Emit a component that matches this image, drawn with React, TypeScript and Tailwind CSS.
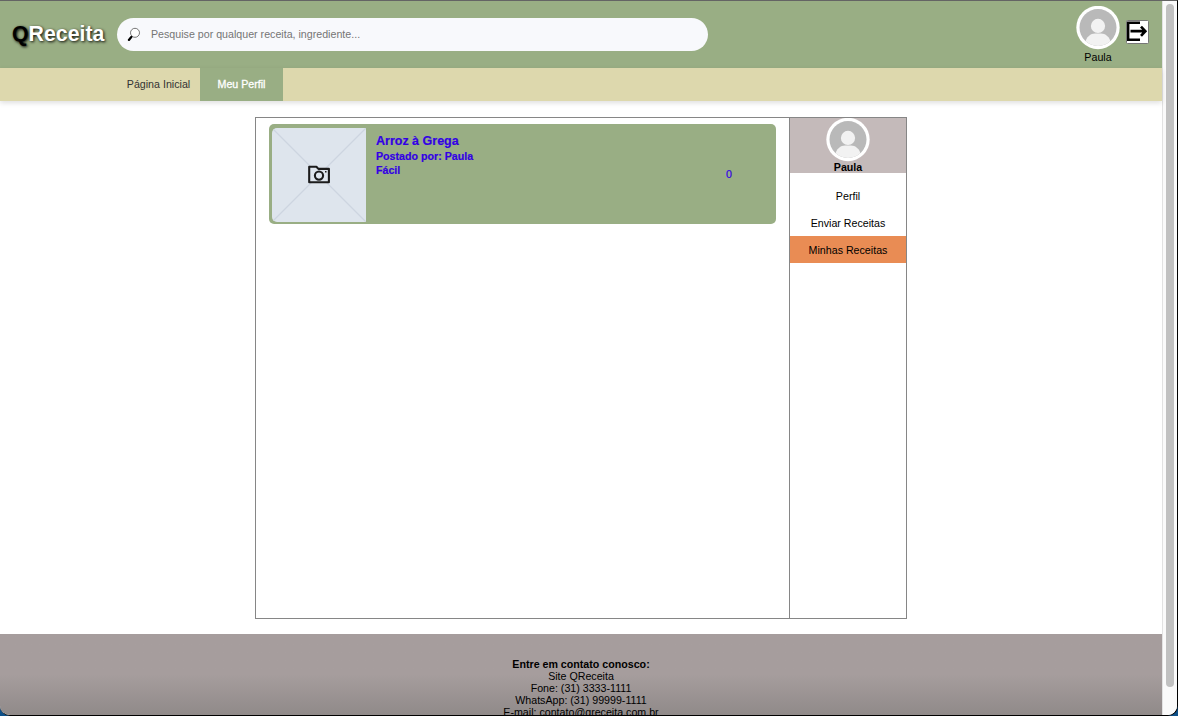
import React from "react";

function Avatar() {
  return (
    <svg viewBox="0 0 44 44" className="block h-11 w-11 shrink-0">
      <defs>
        <clipPath id="avatar-clip">
          <circle cx="22" cy="21.5" r="18.5" />
        </clipPath>
      </defs>
      <circle cx="22" cy="21.5" r="21.7" fill="#fff" />
      <circle cx="22" cy="21.5" r="18.5" fill="#b9b9b9" />
      <g clipPath="url(#avatar-clip)" fill="#f2f2f2">
        <circle cx="22" cy="19.9" r="7.1" />
        <path d="M9 42V38C10 30.5 15 27.6 19 27.6H25C29 27.6 34 30.5 35 38V42Z" />
      </g>
    </svg>
  );
}

function SearchIcon() {
  return (
    <svg viewBox="0 0 14 15" className="h-[15px] w-[14px] shrink-0">
      <circle cx="8" cy="5.8" r="4.5" fill="#fff" stroke="#555" strokeWidth="0.8" />
      <path d="M5 9.2L4.2 10.2" stroke="#555" strokeWidth="1" />
      <path d="M4.3 10.1L1.9 12.9" stroke="#000" strokeWidth="2.3" strokeLinecap="round" />
    </svg>
  );
}

function ExitIcon() {
  return (
    <svg viewBox="0 0 23 24" className="h-6 w-[23px] shrink-0">
      <rect x="0.5" y="0.5" width="22" height="23" rx="1" fill="#fff" stroke="#777" />
      <path d="M14 2.8H2.2V19.7H14" fill="none" stroke="#000" strokeWidth="2.4" />
      <path d="M4.5 11.2H19M15 6.6L19.3 11.2L15 15.8" fill="none" stroke="#000" strokeWidth="2.7" />
    </svg>
  );
}

function Placeholder() {
  return (
    <svg viewBox="0 0 94 94" className="h-[94px] w-[94px] shrink-0 rounded-l-[5px]">
      <rect width="94" height="94" fill="#dee5ed" />
      <path d="M0 0L94 94M94 0L0 94" stroke="#cdd5e0" strokeWidth="1.3" />
      <path
        d="M37.2 38.8H44.4L46.4 40.9H56.9V54.3H37.2Z"
        fill="#dee5ed"
        stroke="#1c1c1c"
        strokeWidth="2.1"
        strokeLinejoin="round"
      />
      <circle cx="47" cy="47.6" r="4.1" fill="none" stroke="#1c1c1c" strokeWidth="2.1" />
      <rect x="53" y="43" width="1.5" height="1.5" fill="#1c1c1c" />
    </svg>
  );
}

export default function App() {
  return (
    <div className="h-[716px] w-[1178px] overflow-hidden bg-[#0d4f88] font-['Liberation_Sans',Arial,sans-serif] text-[10.67px] text-black">
      <div className="flex h-[716px] overflow-hidden rounded-b-[10px] border-t border-r border-b border-t-[#646464] border-r-black border-b-black bg-white">
        <div className="flex w-[1162px] shrink-0 flex-col">
          <header className="flex h-[67px] shrink-0 items-center bg-[#99ae84] pl-3">
            <h1 className="w-[105px] pb-[2px] text-[21.3px] leading-6 font-bold whitespace-nowrap text-white [text-shadow:1px_1px_3px_#000]">
              <span className="text-black">Q</span>Receita
            </h1>
            <div className="flex h-[33px] w-[591px] items-center gap-[10px] rounded-full bg-[#f8f9fc] pl-[10px] text-[#757575]">
              <SearchIcon />
              <span className="pb-[2px]">Pesquise por qualquer receita, ingrediente...</span>
            </div>
            <div className="ml-auto flex h-full gap-[6px] pt-[5px] pr-[13px]">
              <div className="flex flex-col items-center">
                <Avatar />
                <span className="mt-px leading-3">Paula</span>
              </div>
              <div className="pt-[14px]">
                <ExitIcon />
              </div>
            </div>
          </header>
          <nav className="z-10 flex h-[33px] shrink-0 items-stretch bg-[#ddd8ad] pl-[116px] leading-[33px] text-[#333] shadow-[0_2px_5px_rgba(0,0,0,0.13)]">
            <span className="w-[84px] pl-px text-center">Página Inicial</span>
            <span className="w-[83px] bg-[#99ae84] text-center text-white [-webkit-text-stroke:0.3px_white]">
              Meu Perfil
            </span>
          </nav>
          <main className="mt-4 ml-[255px] flex h-[502px] w-[652px] shrink-0 border border-[#868686]">
            <section className="w-[533px] shrink-0 px-[13px] pt-[6px]">
              <article className="flex h-[100px] w-[507px] rounded-[5px] bg-[#99ae84] pt-1 pl-[3px] text-[#3200e4]">
                <Placeholder />
                <div className="ml-[10px] w-[250px] pt-[6px] font-bold [-webkit-text-stroke:0.2px_#3200e4]">
                  <h2 className="text-[12.5px] leading-[15px]">Arroz à Grega</h2>
                  <p className="leading-[14px]">
                    Postado por: Paula
                    <br />
                    Fácil
                  </p>
                </div>
                <span className="ml-auto w-[50px] pt-[38px] leading-4 [-webkit-text-stroke:0.2px_#3200e4]">0</span>
              </article>
            </section>
            <aside className="flex grow flex-col border-l border-[#868686] text-center">
              <div className="mb-[9px] flex h-[55px] flex-col items-center bg-[#c4baba]">
                <Avatar />
                <b className="leading-[11px]">Paula</b>
              </div>
              <span className="h-[27px] leading-[29px]">Perfil</span>
              <span className="h-[27px] leading-[29px]">Enviar Receitas</span>
              <span className="h-[27px] bg-[#e98c54] leading-[29px]">Minhas Receitas</span>
            </aside>
          </main>
          <footer className="mt-[15px] h-[81px] shrink-0 overflow-hidden bg-linear-to-b from-[#a69d9d] from-50% to-[#908a89] pt-[24px] text-center leading-3">
            <b>Entre em contato conosco:</b>
            <p>Site QReceita</p>
            <p>Fone: (31) 3333-1111</p>
            <p>WhatsApp: (31) 99999-1111</p>
            <p>E-mail: contato@qreceita.com.br</p>
          </footer>
        </div>
        <div className="flex w-[15px] shrink-0 border-l border-[#e2e2e2] bg-[#fafafa] pt-[3px] pl-[3px]">
          <div className="h-[683px] w-2 rounded-full bg-[#c1c1c1]" />
        </div>
      </div>
    </div>
  );
}
